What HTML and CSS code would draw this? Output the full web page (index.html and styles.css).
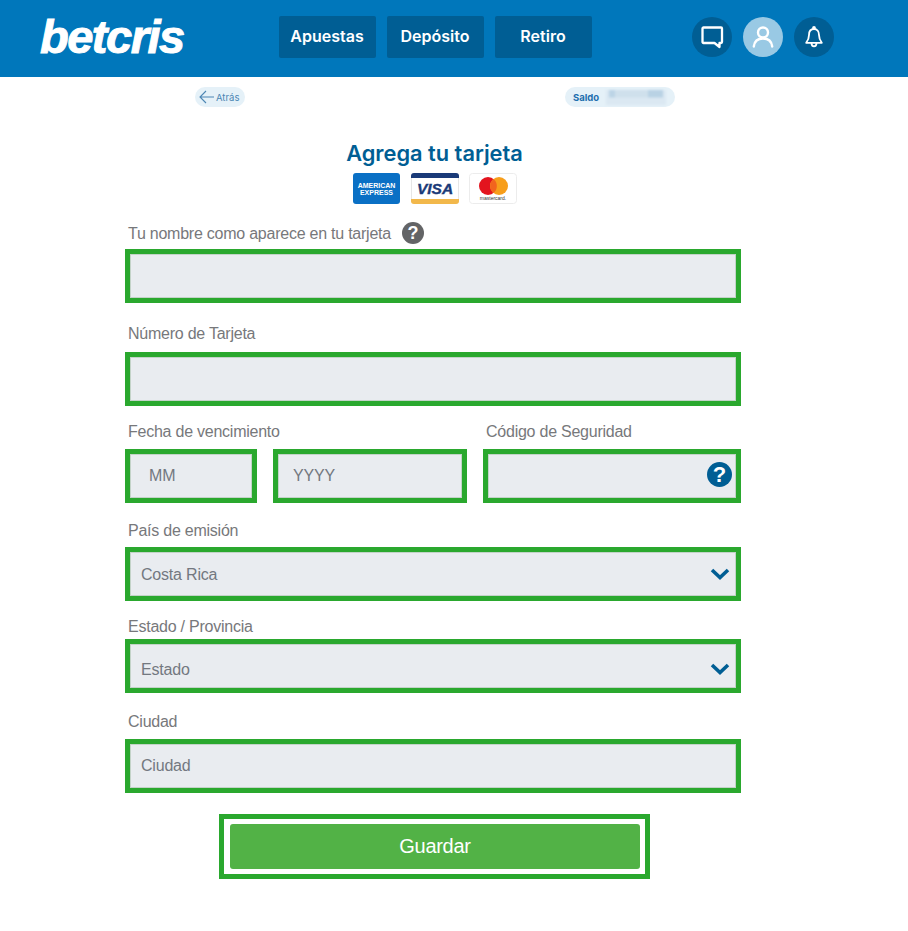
FILE: index.html
```html
<!DOCTYPE html>
<html lang="es">
<head>
    <meta charset="UTF-8">
    <meta name="viewport" content="width=device-width, initial-scale=1.0">
    <title>Agrega tu tarjeta</title>
    <link rel="stylesheet" href="styles.css">
</head>
<body>
    <header class="topbar">
        <a class="logo">betcris</a>
        <nav class="nav">
            <a class="nav-btn">Apuestas</a>
            <a class="nav-btn">Depósito</a>
            <a class="nav-btn">Retiro</a>
        </nav>
        <div class="actions">
            <span class="circle">
                <svg width="24" height="24" viewBox="0 0 24 24" fill="none" stroke="#fff" stroke-width="2.300" stroke-linejoin="round"><path d="M3.500 2.500h17.500a1 1 0 0 1 1 1v13.500a1 1 0 0 1-1 1h-1.500v4l-5-4H3.500a1 1 0 0 1-1-1V3.500a1 1 0 0 1 1-1z"/></svg>
            </span>
            <span class="circle circle-active">
                <svg width="24" height="24" viewBox="0 0 24 24" fill="none" stroke="#fff" stroke-width="2.400" stroke-linecap="round"><circle cx="12" cy="7.500" r="5"/><path d="M2.800 21.500c.6-5.200 4-8 9.200-8s8.600 2.800 9.200 8"/></svg>
            </span>
            <span class="circle">
                <svg width="24" height="24" viewBox="0 0 24 24" fill="none" stroke="#fff" stroke-width="1.800" stroke-linejoin="round"><path d="M12 4c-3.400 0-5 2.600-5 6 0 3.400-.8 5.200-2.800 7.800h15.600c-2-2.600-2.800-4.400-2.800-7.800 0-3.400-1.600-6-5-6z"/><circle cx="12" cy="3" r="1"/><path d="M9.500 18c0 2 1 3.300 2.500 3.300s2.500-1.300 2.500-3.300"/></svg>
            </span>
        </div>
    </header>

    <div class="subbar">
        <a class="pill pill-back">
            <svg width="15" height="14" viewBox="0 0 15 14" fill="none" stroke="#4c86b4" stroke-width="1.100"><path d="M7 1L1 7l6 6M1 7h14"/></svg>
            Atrás
        </a>
        <div class="pill pill-saldo">Saldo <span class="blurred"></span></div>
    </div>

    <main class="content">
        <h1 class="title">Agrega tu tarjeta</h1>
        <div class="cards">
            <svg class="card card-amex" width="47" height="31" viewBox="0 0 47 31">
                <rect width="47" height="31" rx="3" fill="#0a70c5"/>
                <text x="23.500" y="15" class="amex">AMERICAN</text>
                <text x="23.500" y="21.500" class="amex">EXPRESS</text>
            </svg>
            <svg class="card" width="48" height="31" viewBox="0 0 48 31">
                <rect x=".5" y=".5" width="47" height="30" rx="3" fill="#fff" stroke="#e6e6e6"/>
                <path d="M0 5V3a3 3 0 0 1 3-3h42a3 3 0 0 1 3 3v2z" fill="#1a3a78"/>
                <path d="M0 26v2a3 3 0 0 0 3 3h42a3 3 0 0 0 3-3v-2z" fill="#f2b84b"/>
                <text x="24" y="20.500" class="visa">VISA</text>
            </svg>
            <svg class="card" width="48" height="31" viewBox="0 0 48 31">
                <rect x=".5" y=".5" width="47" height="30" rx="3" fill="#fff" stroke="#ececec"/>
                <circle cx="19" cy="13" r="9" fill="#e3141e"/>
                <circle cx="30" cy="13" r="9" fill="#f79e1b"/>
                <path d="M24.500 6a9 9 0 0 1 0 14a9 9 0 0 1 0-14z" fill="#f2641e"/>
                <text x="24" y="27" class="mc">mastercard.</text>
            </svg>
        </div>

        <form class="form">
            <div class="label-row">
                <label class="label">Tu nombre como aparece en tu tarjeta</label>
                <span class="help help-gray">?</span>
            </div>
            <input class="field" type="text">

            <label class="label label-card">Número de Tarjeta</label>
            <input class="field" type="text">

            <div class="expiry-row">
                <div>
                    <label class="label label-expiry">Fecha de vencimiento</label>
                    <div class="expiry-inputs">
                        <input class="field field-mm" type="text" placeholder="MM">
                        <input class="field field-yyyy" type="text" placeholder="YYYY">
                    </div>
                </div>
                <div>
                    <label class="label label-expiry">Código de Seguridad</label>
                    <div class="field-wrap">
                        <input class="field" type="text">
                        <span class="help help-blue">?</span>
                    </div>
                </div>
            </div>

            <label class="label label-country">País de emisión</label>
            <div class="field-wrap">
                <select class="field field-select"><option>Costa Rica</option></select>
                <svg class="chevron" width="20" height="12" viewBox="0 0 20 12" fill="none" stroke="#005e94" stroke-width="3.600"><path d="M2 2l8 7.500L18 2"/></svg>
            </div>

            <label class="label label-state">Estado / Provincia</label>
            <div class="field-wrap">
                <select class="field field-select field-state"><option>Estado</option></select>
                <svg class="chevron chevron-state" width="20" height="12" viewBox="0 0 20 12" fill="none" stroke="#005e94" stroke-width="3.600"><path d="M2 2l8 7.500L18 2"/></svg>
            </div>

            <label class="label label-city">Ciudad</label>
            <input class="field" type="text" placeholder="Ciudad">

            <div class="save-box">
                <button class="save" type="button">Guardar</button>
            </div>
        </form>
    </main>
</body>
</html>
```

FILE: styles.css
```css
* {
    box-sizing: border-box;
}
body {
    margin: 0;
    background: #fff;
    font-family: "Liberation Sans", Arial, sans-serif;
}

.topbar {
    display: flex;
    align-items: center;
    height: 77px;
    padding-bottom: 3px;
    background-color: #0077bb;
}
.logo {
    width: 279px;
    padding-left: 40px;
    font-size: 47px;
    line-height: 48px;
    font-weight: bold;
    font-style: italic;
    letter-spacing: -1.500px;
    color: #fff;
    -webkit-text-stroke: 1px #fff;
}
.nav {
    display: flex;
    gap: 11px;
    width: 413px;
}
.nav-btn {
    display: flex;
    align-items: center;
    justify-content: center;
    width: 97px;
    height: 42px;
    padding: 0 1px 2px 0;
    border-radius: 2px;
    background-color: #005e94;
    color: #fff;
    font-family: Inter, sans-serif;
    font-size: 16px;
    font-weight: 600;
}
.actions {
    display: flex;
    gap: 11px;
}
.circle {
    display: flex;
    align-items: center;
    justify-content: center;
    width: 40px;
    height: 40px;
    border-radius: 50%;
    background-color: #005e94;
}
.circle-active {
    background-color: #99c9e4;
}

.subbar {
    display: flex;
    height: 20px;
    margin-top: 10px;
    padding-left: 195px;
}
.pill {
    display: flex;
    align-items: center;
    height: 20px;
    border-radius: 10px;
    background-color: #e5f1f8;
    font-family: Inter, sans-serif;
    font-size: 9.500px;
}
.pill-back {
    width: 50px;
    gap: 2px;
    padding-left: 4px;
    color: #4c86b4;
}
.pill-saldo {
    width: 110px;
    margin-left: 320px;
    padding-left: 8px;
    color: #1f6fae;
    font-weight: 700;
}
.blurred {
    width: 60px;
    height: 15px;
    margin-left: 7px;
    background:
        linear-gradient(90deg, transparent 0 5%, #bcd4e6 5% 15%, #cfe0ec 15% 70%, #b9d2e4 70% 95%, transparent 95%) top / 100% 50% no-repeat,
        #dbe8f2;
    filter: blur(.8px);
}

.content {
    width: 616px;
    margin: 34px 0 0 125px;
}
.title {
    margin: 0;
    padding-left: 3px;
    text-align: center;
    font-family: Inter, sans-serif;
    font-size: 21.800px;
    line-height: 24px;
    font-weight: 600;
    color: #005e94;
}
.cards {
    display: flex;
    justify-content: center;
    gap: 10px;
    margin-top: 8px;
    padding-left: 4px;
}
.card {
    display: block;
}
.card-amex {
    margin-right: 1px;
}
.amex {
    font-size: 7px;
    font-weight: bold;
    fill: #fff;
    text-anchor: middle;
}
.visa {
    font-size: 15.500px;
    font-weight: bold;
    font-style: italic;
    fill: #1a3a78;
    stroke: #1a3a78;
    stroke-width: .4px;
    text-anchor: middle;
}
.mc {
    font-size: 5px;
    fill: #333;
    text-anchor: middle;
}

.form {
    margin-top: 15px;
}
.label-row {
    display: flex;
    align-items: center;
    gap: 11px;
    height: 30px;
    padding-left: 3px;
}
.label {
    display: block;
    font-size: 16px;
    line-height: 18px;
    color: #77787b;
    letter-spacing: -.24px;
}
.label-card {
    margin: 22px 0 9px 3px;
}
.label-expiry {
    margin: 1px 0 8px 3px;
}
.label-country {
    margin: 19px 0 7px 3px;
}
.label-state {
    margin: 17px 0 3px 3px;
}
.label-city {
    margin: 20px 0 8px 3px;
}
.help {
    display: flex;
    align-items: center;
    justify-content: center;
    border-radius: 50%;
    color: #fff;
    font-weight: bold;
}
.help-gray {
    width: 22px;
    height: 22px;
    margin-top: -2px;
    background-color: #636466;
    font-size: 18px;
}
.help-blue {
    position: absolute;
    top: 13px;
    right: 9px;
    width: 25px;
    height: 25px;
    background-color: #005e94;
    font-size: 22px;
}

.field {
    display: block;
    width: 100%;
    height: 54px;
    padding: 0 11px;
    border: 5px solid #2aa82e;
    outline: 1px solid #c3d3c8;
    outline-offset: -6px;
    border-radius: 0;
    background-color: #e9ecf0;
    color: #737880;
    font-family: "Liberation Sans", Arial, sans-serif;
    font-size: 16px;
    letter-spacing: -.2px;
}
.field::placeholder {
    color: #737880;
    opacity: 1;
}
.field-select {
    appearance: none;
}
.field-state {
    padding-top: 6px;
}
.field-mm {
    width: 132px;
    padding-left: 19px;
}
.field-yyyy {
    width: 194px;
    padding-left: 15px;
}
.field-wrap {
    position: relative;
}
.chevron {
    position: absolute;
    top: 21px;
    right: 11px;
}
.chevron-state {
    top: 24px;
}
.expiry-row {
    display: grid;
    grid-template-columns: 342px 258px;
    gap: 16px;
    margin-top: 16px;
}
.expiry-inputs {
    display: flex;
    gap: 16px;
}

.save-box {
    width: 431px;
    height: 65px;
    margin: 21px 0 0 94px;
    padding: 5px 5px 5px 6px;
    border: 5px solid #2aa82e;
}
.save {
    display: block;
    width: 100%;
    height: 45px;
    border: none;
    border-radius: 3px;
    background-color: #52b246;
    color: #fff;
    font-family: "Liberation Sans", Arial, sans-serif;
    font-size: 20px;
    letter-spacing: -.3px;
}
```
